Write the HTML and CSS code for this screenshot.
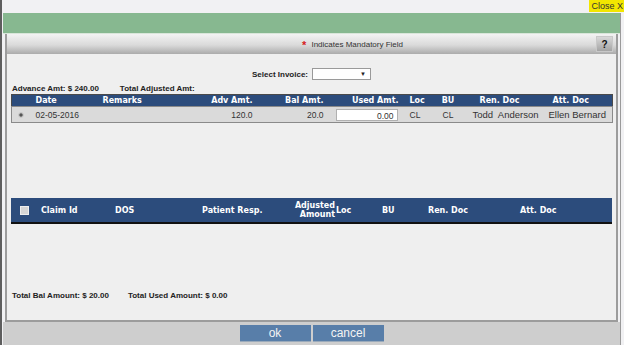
FILE: index.html
```html
<!DOCTYPE html>
<html lang="en">
<head>
    <meta charset="UTF-8">
    <meta name="viewport" content="width=device-width, initial-scale=1.0">
    <title>Advance Adjustment</title>
    <link rel="stylesheet" href="styles.css">
</head>
<body>

    <div class="frame">
        <div class="topbar">
            <span class="close">Close X</span>
        </div>

        <div class="inner">
            <div class="greenbar"></div>

            <div class="panel">
                <div class="panel-head">
                    <span class="mandatory"><span class="star">*</span> Indicates Mandatory Field</span>
                    <span class="help">?</span>
                </div>

                <div class="panel-body">
                    <div class="invoice-row">
                        <label for="invoice">Select Invoice:</label>
                        <div class="select" id="invoice"><span class="arrow">&#9660;</span></div>
                    </div>

                    <div class="amounts">
                        <span>Advance Amt: $ 240.00</span>
                        <span>Total Adjusted Amt:</span>
                    </div>

                    <table class="grid advance">
                        <colgroup>
                            <col style="width:19px"><col style="width:67px"><col style="width:103px">
                            <col style="width:54px"><col style="width:71px"><col style="width:76px">
                            <col style="width:29px"><col style="width:35px"><col style="width:80px">
                            <col style="width:67px">
                        </colgroup>
                        <thead>
                            <tr>
                                <th></th>
                                <th class="left">Date</th>
                                <th class="left">Remarks</th>
                                <th class="right">Adv Amt.</th>
                                <th class="right">Bal Amt.</th>
                                <th class="right used">Used Amt.</th>
                                <th class="left loc">Loc</th>
                                <th>BU</th>
                                <th class="left ren">Ren. Doc</th>
                                <th class="left att">Att. Doc</th>
                            </tr>
                        </thead>
                        <tbody>
                            <tr>
                                <td><span class="radio"></span></td>
                                <td class="left">02-05-2016</td>
                                <td></td>
                                <td class="right">120.0</td>
                                <td class="right">20.0</td>
                                <td class="right used"><span class="amount-input">0.00</span></td>
                                <td class="left loc">CL</td>
                                <td>CL</td>
                                <td class="doc">Todd&nbsp; Anderson</td>
                                <td class="doc">Ellen Bernard</td>
                            </tr>
                        </tbody>
                    </table>

                    <table class="grid claims">
                        <colgroup>
                            <col style="width:26px"><col style="width:74px"><col style="width:87px">
                            <col style="width:92px"><col style="width:46px"><col style="width:42px">
                            <col style="width:46px"><col style="width:92px"><col style="width:96px">
                        </colgroup>
                        <thead>
                            <tr>
                                <th><span class="check"></span></th>
                                <th class="left">Claim Id</th>
                                <th class="left">DOS</th>
                                <th class="left">Patient Resp.</th>
                                <th class="right adj">Adjusted<br>Amount</th>
                                <th class="left flush">Loc</th>
                                <th class="left">BU</th>
                                <th class="left">Ren. Doc</th>
                                <th class="left">Att. Doc</th>
                            </tr>
                        </thead>
                    </table>

                    <div class="totals">
                        <span>Total Bal Amount: $ 20.00</span>
                        <span>Total Used Amount: $ 0.00</span>
                    </div>
                </div>
            </div>

            <div class="footer">
                <button type="button" class="btn">ok</button>
                <button type="button" class="btn">cancel</button>
            </div>
        </div>
    </div>

</body>
</html>
```

FILE: styles.css
```css
html, body {
    margin: 0;
    padding: 0;
}

body {
    font-family: 'Liberation Sans', Arial, sans-serif;
    background-color: #f1f1f3;
    width: 624px;
    height: 345px;
    overflow: hidden;
}

.frame {
    height: 345px;
    border-left: 2px solid #5e5e5e;
    box-sizing: border-box;
}

.topbar {
    height: 13px;
    display: flex;
    justify-content: flex-end;
    align-items: flex-start;
}

.close {
    background-color: #f2e600;
    color: #333;
    font-size: 9px;
    line-height: 12px;
    padding: 0 1px 0 2px;
}

.inner {
    margin-left: 1px;
    margin-right: 3px;
    border-right: 1px solid #9a9a9a;
    height: 332px;
    display: flex;
    flex-direction: column;
}

.greenbar {
    height: 20px;
    background-color: #87b890;
    border-bottom: 1px solid #d9e6da;
}

.panel {
    margin: 0 2px;
    border: 2px solid #9c9c9c;
    border-top: none;
    display: flex;
    flex-direction: column;
}

.panel-head {
    height: 20px;
    background: linear-gradient(#f3f3f3, #dadada 55%, #ababab);
    display: flex;
    align-items: center;
    justify-content: center;
    padding-left: 82px;
    position: relative;
    font-size: 8px;
    color: #333;
}

.star {
    color: #d62020;
    font-size: 11px;
    font-weight: bold;
    line-height: 8px;
    position: relative;
    top: 2px;
    margin-right: 3px;
}

.help {
    position: absolute;
    right: 3px;
    top: 2px;
    width: 17px;
    height: 16px;
    background: linear-gradient(#d8d8d8, #a4a4a4);
    border: 1px solid #c8c8c8;
    box-sizing: border-box;
    font-weight: bold;
    font-size: 10px;
    line-height: 15px;
    text-align: center;
    color: #111;
}

.panel-body {
    height: 266px;
    background-color: #efefef;
    display: flex;
    flex-direction: column;
    padding: 0 4px;
}

.invoice-row {
    margin-top: 14px;
    display: flex;
    justify-content: center;
    align-items: center;
    font-size: 8px;
    font-weight: bold;
    color: #222;
}

.invoice-row label {
    margin-right: 4px;
}

.select {
    width: 59px;
    height: 12px;
    background-color: #fff;
    border: 1px solid #9a9a9a;
    box-sizing: border-box;
    display: flex;
    justify-content: flex-end;
    align-items: center;
    padding-right: 4px;
}

.arrow {
    font-size: 6px;
    color: #222;
}

.amounts, .totals {
    display: flex;
    font-size: 8px;
    font-weight: bold;
    color: #222;
    padding-left: 1px;
}

.amounts {
    gap: 21px;
    margin-top: 3px;
    height: 11px;
    align-items: center;
}

.totals {
    margin-top: auto;
    margin-bottom: 20px;
    gap: 19px;
}

.grid {
    border-collapse: collapse;
    table-layout: fixed;
    width: 601px;
}

.grid th {
    background-color: #2c4c7c;
    color: #fff;
    font-family: 'DejaVu Sans', Verdana, sans-serif;
    font-weight: bold;
    font-size: 8px;
    padding: 0;
    text-align: center;
    white-space: nowrap;
}

.grid td {
    font-size: 8.5px;
    color: #333;
    padding: 0;
    text-align: center;
    white-space: nowrap;
}

.grid .left {
    text-align: left;
    padding-left: 5px;
}

.grid .right {
    text-align: right;
    padding-right: 2px;
}

.grid .loc {
    padding-left: 8px;
}

.advance {
    border: 1px solid #4a4a4a;
}

.advance th {
    height: 11px;
    line-height: 11px;
}

.advance tbody tr {
    height: 16px;
    background-color: #dadada;
    border: 1px solid #8a8a8a;
}

.advance th.used {
    padding-right: 3px;
}

.advance td.used {
    padding-right: 4px;
}

.advance th.ren {
    padding-left: 14px;
}

.advance th.att {
    padding-left: 7px;
}

.advance td.doc {
    font-size: 9.5px;
}

.advance td.doc:last-child {
    padding-right: 3px;
}

.radio {
    display: inline-block;
    width: 6px;
    height: 6px;
    border-radius: 50%;
    background: radial-gradient(#555 30%, #bbb 45%, #e8e8e8);
    vertical-align: middle;
}

.amount-input {
    display: inline-block;
    width: 62px;
    height: 12px;
    line-height: 12px;
    background-color: #fff;
    border: 1px solid #b0b0b0;
    box-sizing: border-box;
    padding-right: 3px;
    vertical-align: middle;
}

.claims {
    margin-top: 75px;
    border-bottom: 2px solid #111;
}

.claims th {
    height: 24px;
}

.claims .left {
    padding-left: 4px;
}

.claims .flush {
    padding-left: 0;
}

.claims .adj {
    line-height: 9px;
    padding-right: 1px;
}

.check {
    display: inline-block;
    width: 7px;
    height: 7px;
    background-color: #d6d6d6;
    border: 1px solid #eee;
    vertical-align: middle;
}

.footer {
    flex: 1;
    background-color: #cecece;
    display: flex;
    justify-content: center;
    align-items: flex-start;
    padding-top: 3px;
    gap: 2px;
}

.btn {
    width: 71px;
    height: 17px;
    border: none;
    border-bottom: 1px solid #9aaabb;
    background-color: #587ea9;
    color: #f4f4f4;
    font-family: 'Liberation Sans', Arial, sans-serif;
    font-size: 12px;
    line-height: 16px;
    padding: 0;
}
```
